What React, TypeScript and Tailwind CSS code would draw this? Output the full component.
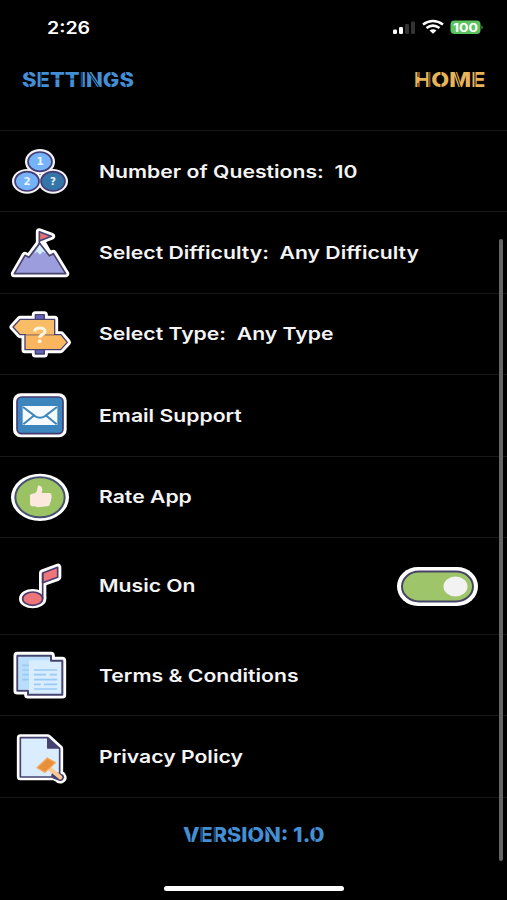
import React, { useState } from 'react';

const NumbersIcon = () => (
  <svg viewBox="0 -4 270 195" className="h-[65px] w-[90px]">
    <g fill="#f4f4f6">
      <ellipse cx="120" cy="64" rx="45" ry="38" />
      <ellipse cx="81" cy="123" rx="45" ry="37" />
      <ellipse cx="159" cy="123" rx="45" ry="37" />
    </g>
    <g stroke="#443d75" strokeWidth="5">
      <ellipse cx="120" cy="64" rx="36" ry="29" fill="#74b3f7" />
      <ellipse cx="81" cy="123" rx="36" ry="29" fill="#74b3f7" />
      <ellipse cx="159" cy="123" rx="36" ry="29" fill="#3576a8" />
    </g>
    <g fill="#eaf4ff" fontFamily="DejaVu Sans, sans-serif" fontWeight="700" fontSize="31" textAnchor="middle">
      <text x="120" y="75">1</text>
      <text x="81" y="134">2</text>
      <text x="159" y="134">?</text>
    </g>
  </svg>
);

const MountainIcon = () => (
  <svg viewBox="0 0 270 195" className="h-[65px] w-[90px]" strokeLinejoin="round">
    <path d="M43 158 L75 103 L87 109 L118 67 V32 L155 46 L123 58 L148 102 L160 97 L197 158 Z" fill="#fff" stroke="#fff" strokeWidth="21" />
    <path d="M43 158 L75 103 L87 109 L119 67 L148 104 L160 98 L197 158 Z" fill="#9b9ddd" stroke="#47436d" strokeWidth="5" />
    <path d="M119 71 L138 97 L128 92 L120 101 L111 92 L102 98 Z" fill="#d6efff" />
    <path d="M118 70 V32 L154 46 L120 59" fill="#e57078" stroke="#47436d" strokeWidth="5" />
  </svg>
);

const SignIcon = () => (
  <svg viewBox="0 -2 270 195" className="h-[65px] w-[90px]" strokeLinejoin="round">
    <path d="M39 73 L60 50 H106 V36 H133 V50 H164 V96 H183 L202 119 L182 141 H133 V154 H106 V141 H75 V96 H60 Z" fill="#fff" stroke="#fff" strokeWidth="21" />
    <path d="M106 36 H133 V154 H106 Z" fill="#6462b7" stroke="#47406f" strokeWidth="4" />
    <path d="M39 73 L60 50 H164 V96 H60 Z" fill="#f9bd68" stroke="#47406f" strokeWidth="4" />
    <path d="M75 96 H183 L202 119 L182 141 H75 Z" fill="#f9b65e" stroke="#47406f" strokeWidth="4" />
    <path d="M77 96 H162" stroke="#b58761" strokeWidth="4" />
    <path d="M104 86 C105 73 135 73 135 86 C135 97 119 95 119 105" fill="none" stroke="#fff5df" strokeWidth="9" />
    <circle cx="119" cy="116" r="6" fill="#fff5df" />
  </svg>
);

const MailIcon = () => (
  <svg viewBox="0 -6 270 195" className="h-[65px] w-[90px]">
    <rect x="39" y="25" width="161" height="132" rx="23" fill="#fff" />
    <rect x="51" y="36" width="138" height="110" rx="14" fill="#3d86bd" stroke="#443b70" strokeWidth="5" />
    <rect x="68" y="63" width="104" height="57" fill="#f7fafd" />
    <path d="M69 66 L106 94 Q120 102 134 94 L171 66 M70 118 L101 92 M170 118 L139 92" fill="none" stroke="#3d86bd" strokeWidth="6" />
  </svg>
);

const ThumbIcon = () => (
  <svg viewBox="0 -2 270 195" className="h-[65px] w-[90px]">
    <ellipse cx="120" cy="95" rx="87" ry="71" fill="#fff" />
    <ellipse cx="120" cy="95" rx="74" ry="60" fill="#9bc364" stroke="#475073" strokeWidth="6" />
    <path d="M90 89 Q91 85 97 84 L105 83 Q113 76 113 64 Q114 59 119 60 Q127 62 127 73 L125 82 H148 Q156 83 154 90 Q157 96 153 101 Q155 108 150 112 Q150 122 141 122 L113 125 L105 122 H96 Q90 121 90 116 Z" fill="#fce9dd" />
  </svg>
);

const MusicIcon = () => (
  <svg viewBox="0 -4 270 195" className="h-[65px] w-[90px]" strokeLinejoin="round">
    <g fill="#fff" stroke="#fff" strokeWidth="22">
      <ellipse cx="98" cy="130" rx="30" ry="18" />
      <path d="M128 130 V53 L173 36 V66 L128 82" fill="none" />
    </g>
    <path d="M128 53 L173 36 V66 L128 82 Z" fill="#ed767b" stroke="#4b3a6d" strokeWidth="5" />
    <ellipse cx="98" cy="130" rx="30" ry="20" fill="#ed767b" stroke="#4b3a6d" strokeWidth="5" />
    <path d="M128 53 V130" stroke="#4b3a6d" strokeWidth="5" />
  </svg>
);

const TermsIcon = () => (
  <svg viewBox="0 -7 270 195" className="h-[65px] w-[90px]" strokeLinejoin="round">
    <path d="M52 31 H153 V46 H187 V148 H84 V136 H52 Z" fill="#fff" stroke="#fff" strokeWidth="23" />
    <path d="M52 31 H153 V46 H187 V148 H84 V136 H52 Z" fill="#d8edff" stroke="#454370" strokeWidth="6" />
    <path d="M56 35 H149 V45 H87 V132 H56 Z" fill="#b9defc" />
    <path d="M67 60 H86 M67 74 H86 M67 88 H86 M67 103 H86 M102 74 H171 M102 88 H138 M149 88 H171 M102 103 H171 M102 117 H122 M132 117 H171 M102 131 H171" stroke="#99caf3" strokeWidth="5" />
  </svg>
);

const PrivacyIcon = () => (
  <svg viewBox="0 -4 270 195" className="h-[65px] w-[90px]" strokeLinejoin="round">
    <path d="M61 34 H143 L179 67 V139 L187 148 Q193 157 185 160 Q177 163 170 155 L161 151 H61 Z" fill="#fff" stroke="#fff" strokeWidth="21" />
    <path d="M61 34 H143 L179 67 V152 H61 Z" fill="#d9edff" stroke="#454270" strokeWidth="5" />
    <path d="M143 36 V65 H177 Z" fill="#454270" stroke="#454270" strokeWidth="4" />
    <path d="M165 147 L181 153" stroke="#454270" strokeWidth="22" strokeLinecap="round" />
    <path d="M144 123 L181 153" stroke="#ffc991" strokeWidth="12" strokeLinecap="round" />
    <path d="M142 95 L166 109 L135 138 L111 124 Z" fill="#e88f3a" stroke="#f3aa5b" strokeWidth="4" />
  </svg>
);

interface RowProps {
  icon: React.ReactNode;
  label: string;
  height?: string;
  children?: React.ReactNode;
}

const Row = ({ icon, label, height = 'h-[81.4px]', children }: RowProps) => (
  <div className={`flex w-full items-center border-t border-[#171717] pt-px ${height}`}>
    <div className="w-[99px] shrink-0">{icon}</div>
    <span className="origin-left scale-x-[1.21] text-[17.5px] font-semibold whitespace-pre text-[#f4f4f4]">{label}</span>
    {children}
  </div>
);

const App: React.FC = () => {
  const [musicOn, setMusicOn] = useState(true);

  return (
    <div className="relative flex h-[900px] w-[507px] flex-col overflow-hidden bg-black font-['Inter',sans-serif]">
      {/* Status bar */}
      <div className="flex h-[54px] items-center justify-between pr-[24px] pl-[47px]">
        <span className="origin-left scale-x-[1.15] pt-[3px] text-[17px] font-semibold text-white">2:26</span>
        <svg viewBox="0 0 92 18" className="h-[18px] w-[92px]">
          <rect x="2" y="11.5" width="4" height="4.5" rx="1.3" fill="#fff" />
          <rect x="8" y="9" width="4" height="7" rx="1.3" fill="#fff" />
          <rect x="14" y="6" width="4" height="10" rx="1.3" fill="#333" />
          <rect x="20" y="3.5" width="4" height="12.5" rx="1.3" fill="#333" />
          <path d="M32 6.5 Q42 -0.5 52 6.5 M35.5 10 Q42 5.2 48.5 10" fill="none" stroke="#fff" strokeWidth="2.6" />
          <path d="M38.5 12.6 Q42 9.9 45.5 12.6 L42 15.7 Z" fill="#fff" />
          <rect x="59.5" y="2.5" width="30" height="13.5" rx="4" fill="#5bc45f" />
          <path d="M90.5 7 Q92.5 9.3 90.5 11.6 Z" fill="#5bc45f" />
          <text x="74.5" y="13.7" textAnchor="middle" textLength="25" lengthAdjust="spacingAndGlyphs" fill="#fff" fontSize="12" fontWeight="700">100</text>
        </svg>
      </div>

      {/* Header */}
      <div className="flex h-[76px] items-start justify-between pt-[12px] pr-[21px] pl-[22px]">
        <div className="relative h-7 w-[112px]">
          <span className="block origin-left scale-x-[1.1] text-[20px] leading-7 font-extrabold whitespace-nowrap text-[#438fd5]">SETTINGS</span>
          <svg viewBox="0 0 112 28" className="absolute inset-0" stroke="#000" strokeWidth="1.2" opacity=".8">
            <path d="M6 5 L8 12 M6 15 L8 23 M19 5 V23 M31 13 H39 M45 13 H53 M60 5 V23 M66 5 L78 22 M89 5 V10 M89 17 V23 M103 5 L105 12 M103 15 L105 23" />
          </svg>
        </div>
        <div className="relative h-7 w-[72px]">
          <span className="block origin-left scale-x-[1.16] text-[20px] leading-7 font-extrabold whitespace-nowrap text-[#e8b45a]">HOME</span>
          <svg viewBox="0 0 72 28" className="absolute inset-0" stroke="#000" strokeWidth="1.2" opacity=".8">
            <path d="M4 5 V11 M4 17 V23 M15 5 V23 M27 5 V10 M27 18 V23 M41 5 L47 23 M61 5 V23" />
          </svg>
        </div>
      </div>

      {/* Settings list */}
      <Row icon={<NumbersIcon />} label="Number of Questions:  10" />
      <Row icon={<MountainIcon />} label="Select Difficulty:  Any Difficulty" />
      <Row icon={<SignIcon />} label="Select Type:  Any Type" />
      <Row icon={<MailIcon />} label="Email Support" />
      <Row icon={<ThumbIcon />} label="Rate App" />
      <Row icon={<MusicIcon />} label="Music On" height="h-[97px]">
        <button onClick={() => setMusicOn(!musicOn)} className="mr-[29px] ml-auto h-[39px] w-[81px]">
          <svg viewBox="0 0 81 39">
            <rect width="81" height="39" rx="21" ry="19.5" fill="#fff" />
            <rect x="5" y="4.5" width="71" height="30" rx="17" ry="15" fill={musicOn ? '#9fc56b' : '#777'} stroke="#454466" strokeWidth="2" />
            <ellipse cx={musicOn ? 58.5 : 22.5} cy="19.5" rx="12" ry="10" fill="#f2f2f2" />
          </svg>
        </button>
      </Row>
      <Row icon={<TermsIcon />} label="Terms & Conditions" />
      <Row icon={<PrivacyIcon />} label="Privacy Policy" />

      {/* Version */}
      <div className="flex h-[76px] justify-center border-t border-[#171717] pt-[23px]">
        <div className="relative h-7 w-[141px]">
          <span className="block origin-left scale-x-[1.08] text-[20px] leading-7 font-extrabold whitespace-nowrap text-[#438fd5]">VERSION: 1.0</span>
          <svg viewBox="0 0 141 28" className="absolute inset-0" stroke="#000" strokeWidth="1.2" opacity=".8">
            <path d="M8 15 V23 M19 5 V23 M32 5 V23 M48 5 L50 12 M48 15 L50 23 M70 5 V10 M70 18 V23 M82 6 L93 22 M132 5 V10 M132 18 V23" />
          </svg>
        </div>
      </div>

      {/* Scrollbar and home indicator */}
      <div className="absolute top-[239px] right-[4px] h-[622px] w-[4px] rounded-full bg-[#656565]" />
      <div className="absolute top-[886px] left-[164px] h-[5px] w-[180px] rounded-full bg-white" />
    </div>
  );
};

export default App;
